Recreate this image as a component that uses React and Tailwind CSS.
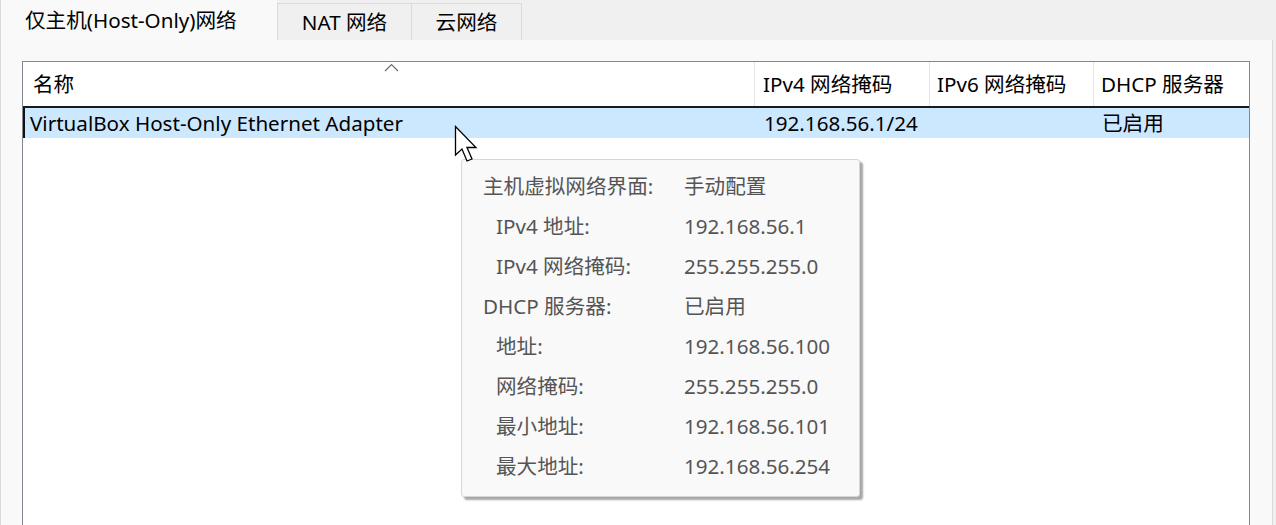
import React from 'react';

const font = { fontFamily: '"Noto Sans", "Noto Sans CJK SC", sans-serif' };

const tipRows = [
    { label: '主机虚拟网络界面:', value: '手动配置', indent: false },
    { label: 'IPv4 地址:', value: '192.168.56.1', indent: true },
    { label: 'IPv4 网络掩码:', value: '255.255.255.0', indent: true },
    { label: 'DHCP 服务器:', value: '已启用', indent: false },
    { label: '地址:', value: '192.168.56.100', indent: true },
    { label: '网络掩码:', value: '255.255.255.0', indent: true },
    { label: '最小地址:', value: '192.168.56.101', indent: true },
    { label: '最大地址:', value: '192.168.56.254', indent: true },
];

const App = () => {
    return (
        <div className="relative w-[1276px] h-[525px] overflow-hidden bg-[#f0f0f0] text-black flex flex-col text-[20.6px]" style={font}>
            {/* Pestañas */}
            <div className="flex items-end h-[40px] shrink-0">
                <div className="w-[277px] h-[40px] bg-[#f9f9f9] border-l border-[#dadada] flex items-center pl-[24px]">
                    仅主机(Host-Only)网络
                </div>
                <div className="w-[135px] h-[37px] bg-[#f0f0f0] border border-b-0 border-[#dadada] flex items-center justify-center">
                    NAT 网络
                </div>
                <div className="w-[110px] h-[37px] bg-[#f0f0f0] border border-b-0 border-l-0 border-[#dadada] flex items-center justify-center">
                    云网络
                </div>
            </div>

            {/* Panel */}
            <div className="flex-1 mr-[3px] bg-[#f9f9f9] border-l border-r border-[#dadada] pl-[21px] pr-[22px] pt-[21px]">
                <div className="h-[600px] bg-white border border-[#828790]">
                    {/* Cabecera */}
                    <div className="relative flex h-[46px] border-b-2 border-[#1a1a1a]">
                        <div className="w-[732px] flex items-center pl-[10px] border-r border-[#e5e5e5]">名称</div>
                        <div className="w-[175px] flex items-center pl-[8px] border-r border-[#e5e5e5]">IPv4 网络掩码</div>
                        <div className="w-[164px] flex items-center pl-[7px] border-r border-[#e5e5e5]">IPv6 网络掩码</div>
                        <div className="flex-1 flex items-center pl-[7px]">DHCP 服务器</div>
                        <svg className="absolute left-[361px] top-[1px]" width="15" height="9" viewBox="0 0 15 9">
                            <path d="M1 8 L7.5 1.5 L14 8" fill="none" stroke="#6d6d6d" strokeWidth="1.2" />
                        </svg>
                    </div>
                    {/* Fila seleccionada */}
                    <div className="flex h-[30px] bg-[#cce8ff] items-center border-l-2 border-[#111]">
                        <div className="w-[731px] pl-[5px]">VirtualBox Host-Only Ethernet Adapter</div>
                        <div className="w-[175px] pl-[8px]">192.168.56.1/24</div>
                        <div className="w-[164px]" />
                        <div className="flex-1 pl-[7px]">已启用</div>
                    </div>
                </div>
            </div>

            {/* Tooltip */}
            <div className="absolute left-[461px] top-[159px] w-[399px] h-[338px] bg-[#f9f9f9] border border-[#d6d6d6] rounded-[3px] shadow-[3px_3px_2px_rgba(0,0,0,0.35)] pt-[6px] pl-[21px] text-[#555]">
                {tipRows.map((row, i) => (
                    <div key={i} className="flex h-[40px] items-center">
                        <div className={`w-[201px] ${row.indent ? 'pl-[13px]' : ''}`}>{row.label}</div>
                        <div>{row.value}</div>
                    </div>
                ))}
            </div>

            {/* Cursor */}
            <svg className="absolute left-[454px] top-[125px]" width="28" height="40" viewBox="0 0 28 40">
                <path d="M1.5 1.5 L1.5 30 L8 24 L13 36 L18 34 L13 22.5 L22 22.5 Z" fill="white" stroke="black" strokeWidth="1.3" strokeLinejoin="miter" />
            </svg>
        </div>
    );
};

export default App;
